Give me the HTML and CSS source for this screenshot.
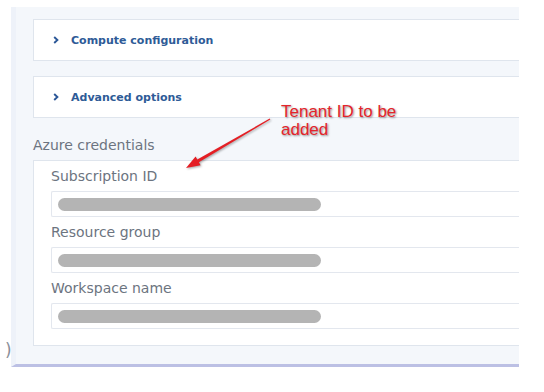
FILE: index.html
```html
<!DOCTYPE html>
<html lang="en">
<head>
    <meta charset="UTF-8">
    <meta name="viewport" content="width=device-width, initial-scale=1.0">
    <link rel="stylesheet" href="styles.css">
</head>
<body>
    <div class="page">
        <div class="gutter"><span class="edge">)</span></div>
        <div class="panel">
            <div class="section">
                <svg class="chev" width="6" height="8" viewBox="0 0 6 8"><polyline points="1.2,1 4.4,4 1.2,7" fill="none" stroke="#2b5797" stroke-width="1.9"/></svg>
                Compute configuration
            </div>
            <div class="section">
                <svg class="chev" width="6" height="8" viewBox="0 0 6 8"><polyline points="1.2,1 4.4,4 1.2,7" fill="none" stroke="#2b5797" stroke-width="1.9"/></svg>
                Advanced options
            </div>

            <div class="group-title">Azure credentials</div>
            <div class="group">
                <div class="field-label">Subscription ID</div>
                <div class="field"><span class="mask"></span></div>
                <div class="field-label">Resource group</div>
                <div class="field"><span class="mask"></span></div>
                <div class="field-label">Workspace name</div>
                <div class="field"><span class="mask"></span></div>
            </div>
        </div>
    </div>

    <!-- annotation drawn over the screenshot -->
    <svg class="arrow" width="544" height="392" viewBox="0 0 544 392">
        <polygon points="186,168 200.6,165.2 198.9,162.2 270.3,119.4 269.7,118.6 197.3,159.6 195.6,156.6" fill="#e41e24"/>
    </svg>
    <div class="note">Tenant ID to be<br>added</div>
</body>
</html>
```

FILE: styles.css
```css
* {
    margin: 0;
    padding: 0;
    box-sizing: border-box;
}
body {
    background-color: #fff;
    font-family: "DejaVu Sans", Verdana, sans-serif;
    width: 544px;
    height: 392px;
    overflow: hidden;
}

/* Outer panel */
.page {
    display: flex;
    padding-top: 7px;
}
.gutter {
    width: 11px;
    display: flex;
    align-items: flex-end;
    padding-bottom: 8px;
}
.edge {
    font-size: 17px;
    line-height: 18px;
    color: #8a8f99;
    margin-left: 5px;
}
.panel {
    width: 508px;
    background-color: #f4f7fb;
    border-left: 5px solid #eef2f9;
    border-bottom: 3px solid #bcc0e4;
    padding: 12px 0 18px 17px;
}

/* Collapsible sections */
.section {
    display: flex;
    align-items: center;
    gap: 12px;
    height: 42px;
    padding-left: 19px;
    background-color: #fff;
    border: 1px solid #dfe5ed;
    border-right: none;
    color: #2e5b97;
    font-size: 11px;
    font-weight: bold;
    margin-bottom: 15px;
}
.chev {
    flex-shrink: 0;
}

/* Credentials group */
.group-title {
    font-size: 14px;
    line-height: 18px;
    color: #6c7480;
    margin-top: 18px;
    margin-bottom: 6px;
}
.group {
    background-color: #fff;
    border: 1px solid #dfe5ed;
    border-right: none;
    padding: 7px 0 16px 17px;
}
.field-label {
    font-size: 14px;
    line-height: 16px;
    color: #6c7480;
    margin-bottom: 7px;
}
.field {
    height: 26px;
    border: 1px solid #e3e7ee;
    border-right: none;
    border-radius: 2px 0 0 2px;
    display: flex;
    align-items: center;
    padding-left: 6px;
    margin-bottom: 7px;
}
.field:last-child {
    margin-bottom: 0;
}
.mask {
    width: 263px;
    height: 13px;
    border-radius: 7px;
    background-color: #b4b4b4;
    filter: blur(0.7px);
}

/* Red annotation */
.arrow {
    position: absolute;
    left: 0;
    top: 0;
    filter: drop-shadow(1px 1px 1px rgba(0, 0, 0, 0.35));
}
.note {
    position: absolute;
    left: 281px;
    top: 103px;
    font-family: "Liberation Sans", Arial, sans-serif;
    font-size: 17px;
    line-height: 18px;
    color: #e4242b;
    text-shadow: 1px 1px 2px rgba(60, 60, 60, 0.55);
}
```
